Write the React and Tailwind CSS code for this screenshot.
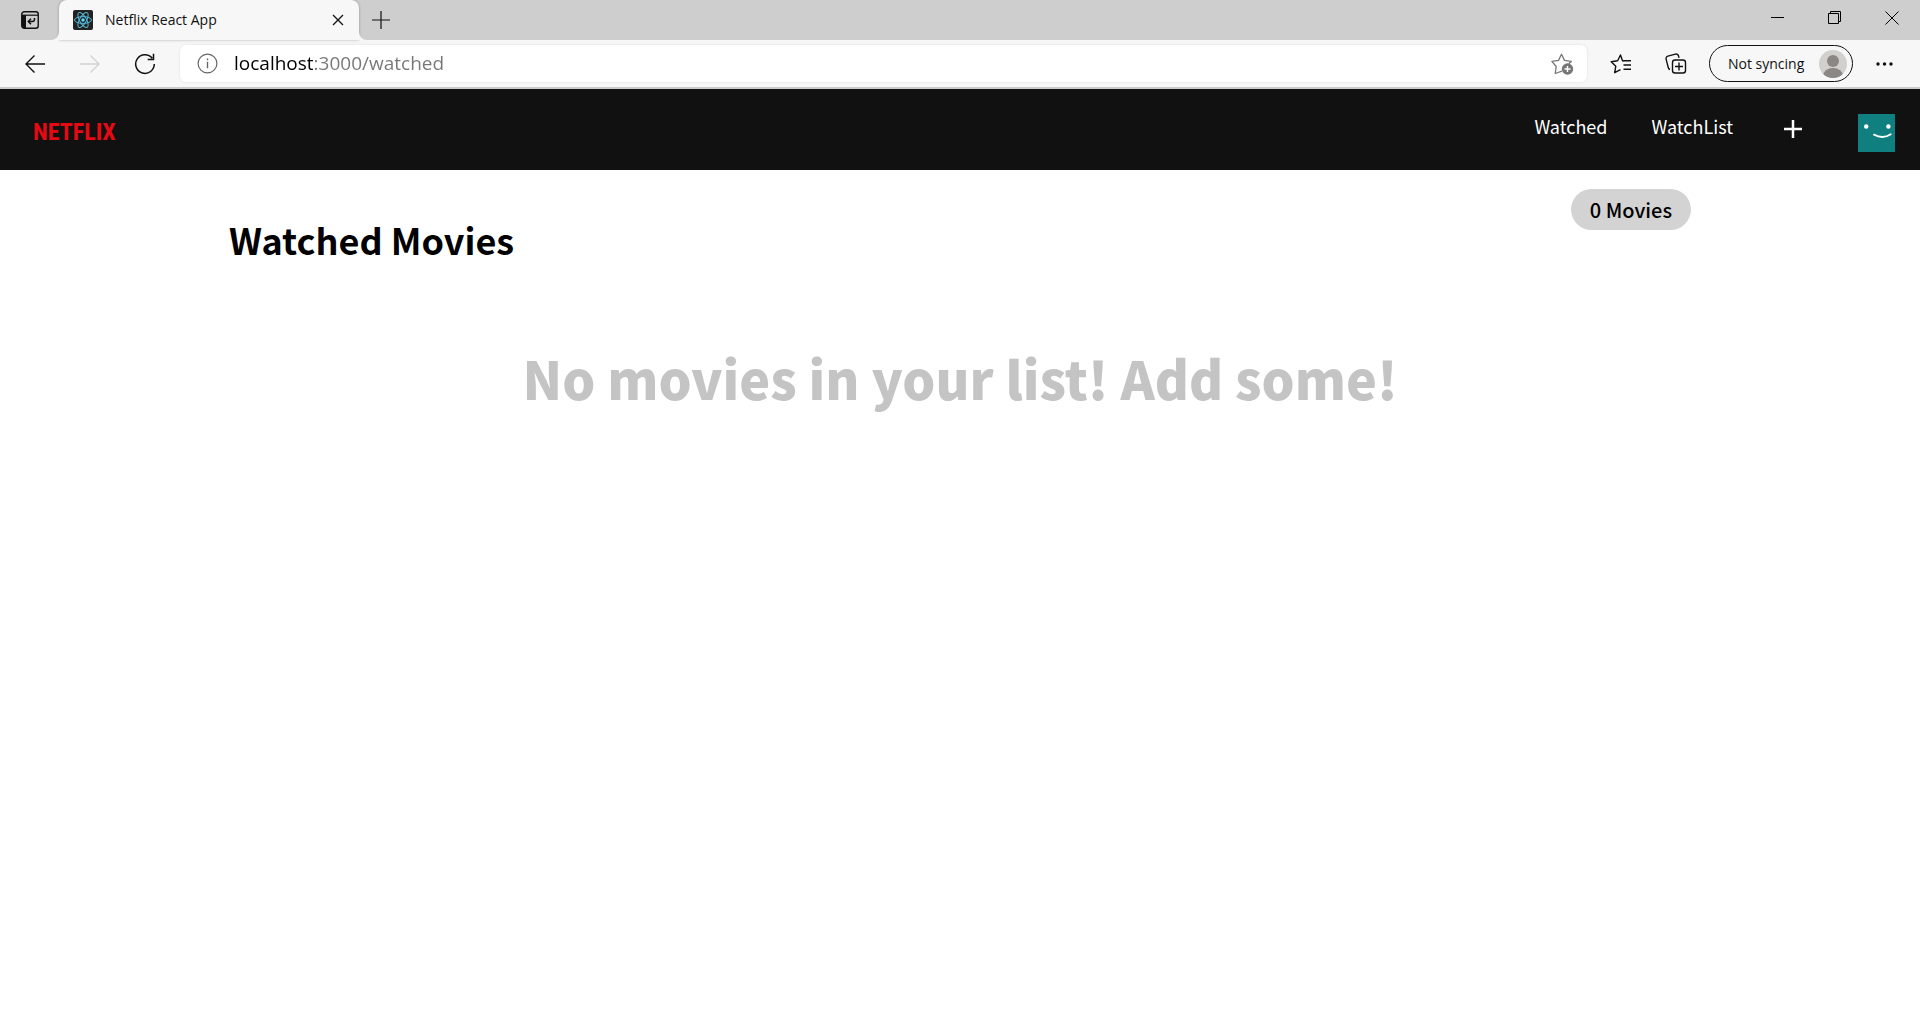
const ui = "font-['Open_Sans','Noto_Sans',sans-serif]";
const site = "font-['Noto_Sans_CJK_JP','Noto_Sans',sans-serif]";

function TabActionsIcon() {
  return (
    <svg width="18" height="18" viewBox="0 0 18 18" fill="none" aria-hidden="true">
      <rect x="0.75" y="0.75" width="16.5" height="16.5" rx="2.5" stroke="#111" strokeWidth="1.4" />
      <path d="M1 4.2h16" stroke="#111" strokeWidth="1.2" />
      <path d="M1 4h4v13H3a2 2 0 0 1-2-2z" fill="#111" />
      <path d="M13.5 7v1.2a2.3 2.3 0 0 1-2.3 2.3H7.5" stroke="#111" strokeWidth="1.5" />
      <path d="M10 7.8 7.3 10.5 10 13.2" stroke="#111" strokeWidth="1.5" />
    </svg>
  );
}

function ReactIcon() {
  return (
    <svg width="20" height="20" viewBox="0 0 20 20" fill="none" aria-hidden="true">
      <rect width="20" height="20" rx="2" fill="#222" />
      <g stroke="#53b9d8" strokeWidth="1">
        <ellipse cx="10" cy="10" rx="8.5" ry="3.4" />
        <ellipse cx="10" cy="10" rx="8.5" ry="3.4" transform="rotate(60 10 10)" />
        <ellipse cx="10" cy="10" rx="8.5" ry="3.4" transform="rotate(120 10 10)" />
      </g>
      <circle cx="10" cy="10" r="1.7" fill="#61dafb" />
    </svg>
  );
}

function TabStrip() {
  return (
    <div className="flex h-10 items-stretch bg-[#cecece]">
      <button aria-label="Tab actions" className="flex w-[59px] items-center justify-center">
        <TabActionsIcon />
      </button>
      <div className="relative flex w-[300px] items-center rounded-t-lg bg-[#f7f7f7] pr-[14px] pl-[14px] shadow-[0_0_3px_rgba(0,0,0,0.3)]">
        <svg className="absolute bottom-0 -left-2" width="8" height="8" aria-hidden="true">
          <path d="M8 0v8H0a8 8 0 0 0 8-8z" fill="#f7f7f7" />
        </svg>
        <svg className="absolute -right-2 bottom-0" width="8" height="8" aria-hidden="true">
          <path d="M0 0v8h8a8 8 0 0 1-8-8z" fill="#f7f7f7" />
        </svg>
        <ReactIcon />
        <span className="ml-3 flex-1 text-sm text-[#111]">Netflix React App</span>
        <button aria-label="Close tab">
          <svg width="14" height="14" viewBox="0 0 14 14" stroke="#111" strokeWidth="1.3" aria-hidden="true">
            <path d="M2 2l10 10M12 2L2 12" />
          </svg>
        </button>
      </div>
      <button aria-label="New tab" className="ml-[13px]">
        <svg width="18" height="18" viewBox="0 0 18 18" stroke="#111" strokeWidth="1.2" aria-hidden="true">
          <path d="M9 0v18M0 9h18" />
        </svg>
      </button>
      <div className="ml-auto flex">
        <button aria-label="Minimize" className="flex w-[57px] items-center justify-center">
          <svg width="14" height="14" viewBox="0 0 14 14" stroke="#000" aria-hidden="true">
            <path d="M0 4.5h13" />
          </svg>
        </button>
        <button aria-label="Restore" className="flex w-[57px] items-center justify-center pb-1">
          <svg width="14" height="14" viewBox="0 0 14 14" fill="none" stroke="#000" aria-hidden="true">
            <path d="M0.5 2.5h10v10h-10zM2.5 2.5v-2h10v10h-2" />
          </svg>
        </button>
        <button aria-label="Close window" className="flex w-[57px] items-center justify-center pb-1">
          <svg width="14" height="14" viewBox="0 0 14 14" stroke="#000" aria-hidden="true">
            <path d="M0.5 0.5l13 13M13.5 0.5l-13 13" />
          </svg>
        </button>
      </div>
    </div>
  );
}

function ToolButton({ label, children }) {
  return (
    <button aria-label={label} className="flex w-[55px] shrink-0 items-center justify-center">
      {children}
    </button>
  );
}

function Toolbar() {
  return (
    <div className="flex h-[49px] items-stretch border-b-2 border-[#cbcbcb] bg-[#f7f7f7] py-[5px] pr-2 pl-[7px]">
      <ToolButton label="Back">
        <svg width="20" height="18" viewBox="0 0 20 18" fill="none" stroke="#111" strokeWidth="1.4" aria-hidden="true">
          <path d="M20 9H1M9.5 0.5L1 9l8.500 8.500" />
        </svg>
      </ToolButton>
      <ToolButton label="Forward">
        <svg width="20" height="18" viewBox="0 0 20 18" fill="none" stroke="#d2d2d2" strokeWidth="1.4" aria-hidden="true">
          <path d="M0 9h19M10.500 0.500L19 9l-8.500 8.500" />
        </svg>
      </ToolButton>
      <ToolButton label="Refresh">
        <svg width="22" height="22" viewBox="0 0 22 22" fill="none" stroke="#111" strokeWidth="1.5" aria-hidden="true">
          <path d="M18.200 5.200A9.300 9.300 0 1 0 20.300 11M19.500 0.800V6.500H13.700" />
        </svg>
      </ToolButton>
      <form className="ml-2 flex flex-1 items-center rounded-md bg-white shadow-[0_0_3px_rgba(0,0,0,0.1)]" onSubmit={(e) => e.preventDefault()}>
        <button type="button" aria-label="Site information" className="ml-[17px]">
          <svg width="21" height="21" viewBox="0 0 21 21" fill="none" stroke="#666" strokeWidth="1.200" aria-hidden="true">
            <circle cx="10.500" cy="10.500" r="9.400" />
            <path d="M10.500 8.800v6.400M10.500 5.600v1.600" strokeWidth="1.400" />
          </svg>
        </button>
        <input
          aria-label="Address"
          defaultValue="localhost:3000/watched"
          className="ml-4 flex-1 bg-[linear-gradient(90deg,#000_79px,#767676_79px)] bg-clip-text text-[19px] text-transparent caret-black outline-none"
        />
        <button type="button" aria-label="Add to favorites" className="mr-[13px]">
          <svg width="23" height="22" viewBox="0 0 23 22" fill="none" aria-hidden="true">
            <path d="M11 18.200L4.200 20.500l1-7L0.900 8.400l6.600-1L10.500 1.300l3 6.100 6.800 1-2.600 2.400" stroke="#767676" strokeWidth="1.300" strokeLinejoin="round" />
            <circle cx="16.500" cy="16" r="5.700" fill="#767676" />
            <path d="M16.500 13v6M13.500 16h6" stroke="#fff" strokeWidth="1.400" />
          </svg>
        </button>
      </form>
      <div className="ml-[6px] flex">
        <ToolButton label="Favorites">
          <svg width="22" height="20" viewBox="0 0 22 20" fill="none" stroke="#111" strokeWidth="1.400" strokeLinejoin="round" aria-hidden="true">
            <path d="M14 7l-1.500-.3L10.500 1 7.600 6.800 1.200 7.700l4.600 4.500-1.100 6.500 5.800-3.100M13.500 6.700H21M13.500 11H21M13.500 15.300H21" />
          </svg>
        </ToolButton>
        <ToolButton label="Collections">
          <svg width="22" height="22" viewBox="0 0 22 22" fill="none" stroke="#111" strokeWidth="1.400" aria-hidden="true">
            <path d="M5 16.500a2.500 2.500 0 0 1-1.700-1.700L1.100 6.200a2.500 2.500 0 0 1 1.800-3.100l7.500-2a2.500 2.500 0 0 1 3.100 1.800l.5 2" />
            <rect x="7.500" y="7" width="13" height="13" rx="2.500" />
            <path d="M14 9.500v8M10 13.500h8" />
          </svg>
        </ToolButton>
      </div>
      <button className="ml-[6px] flex w-[144px] items-center justify-between rounded-full border border-[#111] pr-[5px] pl-[18px] text-sm text-[#111]">
        Not syncing
        <svg width="28" height="28" viewBox="0 0 28 28" aria-hidden="true">
          <clipPath id="profile">
            <circle cx="14" cy="14" r="14" />
          </clipPath>
          <g clipPath="url(#profile)">
            <rect width="28" height="28" fill="#d2d0cd" />
            <circle cx="14" cy="11" r="6" fill="#8a8784" />
            <ellipse cx="14" cy="26" rx="10" ry="8" fill="#8a8784" />
          </g>
        </svg>
      </button>
      <div className="ml-1 flex">
        <ToolButton label="Settings and more">
          <svg width="17" height="4" viewBox="0 0 17 4" fill="#111" aria-hidden="true">
            <circle cx="2" cy="2" r="1.700" />
            <circle cx="8.500" cy="2" r="1.700" />
            <circle cx="15" cy="2" r="1.700" />
          </svg>
        </ToolButton>
      </div>
    </div>
  );
}

function Header() {
  return (
    <header className="flex h-[81px] items-center justify-between bg-[#111] pr-[25px] pl-[33px] text-white">
      <a href="#home" className="pt-1 font-['Liberation_Sans_Narrow','Roboto_Condensed','Liberation_Sans',sans-serif] text-2xl leading-6 font-bold text-[#e50914]">
        NETFLIX
      </a>
      <nav className="flex items-center text-lg leading-6">
        <a href="#watched" className="mr-11 pb-2">Watched</a>
        <a href="#watchlist" className="mr-[51px] pb-2">WatchList</a>
        <button aria-label="Add movie" className="mr-14 pb-[2px]">
          <svg width="18" height="18" viewBox="0 0 18 18" stroke="#fff" strokeWidth="2.500" aria-hidden="true">
            <path d="M9 0v18M0 9h18" />
          </svg>
        </button>
        <button aria-label="Profile" className="pt-[6px]">
          <svg className="block" width="37" height="38" viewBox="0 0 37 38" fill="none" aria-hidden="true">
            <rect width="37" height="38" fill="#0f7f80" />
            <circle cx="8.200" cy="12.500" r="2.200" fill="#fff" />
            <circle cx="30.400" cy="12.500" r="2.200" fill="#fff" />
            <path d="M16 20.700q9 4.800 16.700-.4" stroke="#fff" strokeWidth="1.900" strokeLinecap="round" />
          </svg>
        </button>
      </nav>
    </header>
  );
}

export default function App() {
  return (
    <div className="min-h-screen bg-white text-black">
      <div className={ui}>
        <TabStrip />
        <Toolbar />
      </div>
      <div className={site}>
        <Header />
        <main className="mx-auto max-w-[1462px]">
          <div className="flex items-start justify-between pt-[19px]">
            <h1 className="pt-6 text-4xl leading-[52px] font-bold">Watched Movies</h1>
            <span className="rounded-full bg-[#d3d3d3] px-[19px] py-[6px] text-xl leading-[29px] font-medium">0 Movies</span>
          </div>
          <h2 className="mt-[73px] text-center text-[52px] leading-[80px] font-black text-[#c4c4c4]">
            No movies in your list! Add some!
          </h2>
        </main>
      </div>
    </div>
  );
}
